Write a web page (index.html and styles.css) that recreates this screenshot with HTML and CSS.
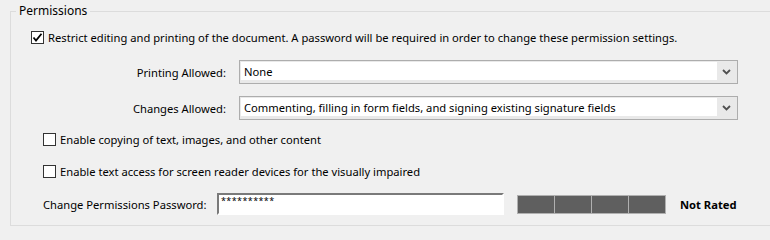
FILE: index.html
```html
<!DOCTYPE html>
<html>
<head>
<meta charset="utf-8">
<link rel="stylesheet" href="styles.css">
</head>
<body>
<fieldset class="group">
  <legend class="legend">Permissions</legend>
  <div class="check-row main">
    <span class="cb checked"><svg viewBox="0 0 11 11" width="11" height="11"><path d="M1.5 5.5 L4 8.5 L9.5 1.8" fill="none" stroke="#000" stroke-width="1.8"/></svg></span>
    <span class="cb-label">Restrict editing and printing of the document. A password will be required in order to change these permission settings.</span>
  </div>
  <div class="field-row first">
    <span class="field-label">Printing Allowed:</span>
    <div class="select"><span class="select-value">None</span><span class="select-arrow"><svg viewBox="0 0 9 6" width="9" height="6"><path d="M1 1 L4.5 4.5 L8 1" fill="none" stroke="#505050" stroke-width="1.8"/></svg></span></div>
  </div>
  <div class="field-row">
    <span class="field-label">Changes Allowed:</span>
    <div class="select"><span class="select-value">Commenting, filling in form fields, and signing existing signature fields</span><span class="select-arrow"><svg viewBox="0 0 9 6" width="9" height="6"><path d="M1 1 L4.5 4.5 L8 1" fill="none" stroke="#505050" stroke-width="1.8"/></svg></span></div>
  </div>
  <div class="check-row sub">
    <span class="cb"></span>
    <span class="cb-label">Enable copying of text, images, and other content</span>
  </div>
  <div class="check-row sub">
    <span class="cb"></span>
    <span class="cb-label">Enable text access for screen reader devices for the visually impaired</span>
  </div>
  <div class="pw-row">
    <span class="pw-label">Change Permissions Password:</span>
    <div class="pw-input">**********</div>
    <div class="meter"><span></span><span></span><span></span><span></span></div>
    <span class="rating">Not Rated</span>
  </div>
</fieldset>
</body>
</html>
```
FILE: styles.css
```css
html, body {
  margin: 0;
  padding: 0;
  background: #f0f0f0;
  font-family: "Noto Sans", "Open Sans", sans-serif;
  font-size: 11.2px;
  color: #000;
}
.group {
  margin: 3px -20px 0 10px;
  padding: 0;
  border: 1px solid #dcdcdc;
  height: 223px;
  box-sizing: border-box;
}
.legend {
  margin-left: 5px;
  padding: 0 3px;
  line-height: 16px;
  font-size: 12px;
}
.check-row {
  display: flex;
  align-items: center;
  height: 16px;
}
.check-row.main {
  margin: 10px 0 0 20px;
}
.check-row.sub {
  margin: 0 0 0 32px;
}
.check-row.sub + .check-row.sub {
  margin-top: 16px;
}
.field-row + .check-row.sub {
  margin-top: 11px;
}
.cb {
  width: 13px;
  height: 13px;
  box-sizing: border-box;
  border: 1px solid #333;
  background: #fff;
  display: flex;
  align-items: center;
  justify-content: center;
  flex: none;
}
.cb-label {
  margin-left: 4px;
  white-space: nowrap;
}
.field-row {
  display: flex;
  align-items: center;
  margin-top: 12px;
}
.field-row.first {
  margin-top: 15px;
}
.field-label {
  width: 215px;
  text-align: right;
  flex: none;
}
.select {
  margin-left: 13px;
  width: 499px;
  height: 24px;
  box-sizing: border-box;
  border: 1px solid #adadad;
  background: #e9e9e9;
  padding: 1px;
  display: flex;
}
.select-value {
  flex: 1;
  background: #fff;
  margin-bottom: 2px;
  padding-left: 3px;
  line-height: 19px;
  white-space: nowrap;
}
.select-arrow {
  width: 19px;
  display: flex;
  align-items: center;
  justify-content: center;
}
.pw-row {
  display: flex;
  align-items: center;
  margin: 14px 0 0 32px;
}
.pw-label {
  width: 174px;
  flex: none;
  white-space: nowrap;
}
.pw-input {
  width: 287px;
  height: 22px;
  box-sizing: border-box;
  border: 2px solid #fff;
  border-top-color: #7a7a7a;
  border-left-color: #7a7a7a;
  background: #fff;
  font-size: 9px;
  line-height: 11px;
  padding-left: 2px;
  letter-spacing: 0.4px;
}
.meter {
  margin-left: 13px;
  display: flex;
  gap: 1px;
  background: #b0b0b0;
  padding: 1px;
  height: 19px;
  box-sizing: border-box;
}
.meter span {
  width: 36px;
  background: #5f5f5f;
}
.rating {
  margin-left: 14px;
  font-weight: bold;
}
```
